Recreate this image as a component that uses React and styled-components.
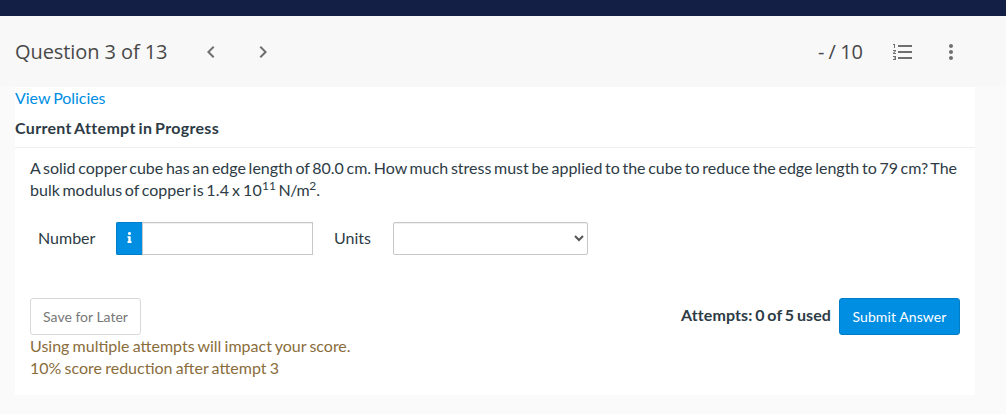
import React, { useState } from "react";
import styled, { createGlobalStyle } from "styled-components";
import {
  MdChevronLeft,
  MdChevronRight,
  MdFormatListNumbered,
  MdMoreVert,
} from "react-icons/md";
import { FaInfo } from "react-icons/fa";

function App() {
  const [number, setNumber] = useState("");
  const [unit, setUnit] = useState("");

  return (
    <>
      <GlobalStyle />
      <TopBar />
      <Header>
        <Title>Question 3 of 13</Title>
        <IconButton aria-label="Previous question">
          <MdChevronLeft />
        </IconButton>
        <IconButton $left={28} aria-label="Next question">
          <MdChevronRight />
        </IconButton>
        <Score>- / 10</Score>
        <IconButton $left={28} aria-label="Question list">
          <MdFormatListNumbered />
        </IconButton>
        <IconButton $left={24} aria-label="More options">
          <MdMoreVert />
        </IconButton>
      </Header>

      <Panel>
        <PolicyLink href="#">View Policies</PolicyLink>
        <Status>Current Attempt in Progress</Status>
        <Body>
          <Question>
            A solid copper cube has an edge length of 80.0 cm. How much stress
            must be applied to the cube to reduce the edge length to 79 cm? The
            bulk modulus of copper is <Value>1.4 x 10</Value>
            <sup>11</sup> <Value $tight>N/m</Value>
            <sup>2</sup>.
          </Question>

          <AnswerRow>
            <Label htmlFor="number" $width={78}>
              Number
            </Label>
            <Info aria-label="Number format">
              <FaInfo />
            </Info>
            <NumberInput
              id="number"
              value={number}
              onChange={(e) => setNumber(e.target.value)}
            />
            <Label htmlFor="units" $width={59} $left={21}>
              Units
            </Label>
            <UnitSelect
              id="units"
              value={unit}
              onChange={(e) => setUnit(e.target.value)}
            >
              <option value=""></option>
            </UnitSelect>
          </AnswerRow>

          <Actions>
            <Button>Save for Later</Button>
            <Attempts>Attempts: 0 of 5 used</Attempts>
            <Button $primary>Submit Answer</Button>
          </Actions>

          <Warning>
            <div>Using multiple attempts will impact your score.</div>
            <div>10% score reduction after attempt 3</div>
          </Warning>
        </Body>
      </Panel>
    </>
  );
}

const GlobalStyle = createGlobalStyle`
  * {
    box-sizing: border-box;
  }
  body {
    margin: 0;
    background: #fafafa;
    color: #2d3b45;
    font-family: Lato, "Open Sans", sans-serif;
    font-size: 16px;
    line-height: 22px;
  }
`;

const TopBar = styled.div`
  height: 16px;
  background: #131f45;
`;

const Header = styled.header`
  display: flex;
  align-items: center;
  height: 71px;
  padding: 1px 43px 0 15px;
  background: #f8f8f8;
  color: #484848;
  font-family: "Open Sans", sans-serif;
  font-size: 20px;
`;

const Title = styled.div`
  width: 184px;
  letter-spacing: -0.08px;
`;

const IconButton = styled.button`
  display: flex;
  margin: 0 0 0 ${(props) => props.$left || 0}px;
  padding: 0;
  border: none;
  background: none;
  color: #6f6f6f;
  font-size: 24px;
  cursor: pointer;
`;

const Score = styled.div`
  margin-left: auto;
  word-spacing: -1px;
`;

const Panel = styled.main`
  width: 960px;
  height: 308px;
  margin-left: 15px;
  background: #fff;
`;

const PolicyLink = styled.a`
  display: block;
  color: #008ee2;
  text-decoration: none;
  letter-spacing: -0.05px;
  word-spacing: -1px;
`;

const Status = styled.div`
  height: 39px;
  padding-top: 8px;
  border-bottom: 1px solid #eee;
  font-weight: 700;
  letter-spacing: 0.32px;
  word-spacing: -1.4px;
`;

const Body = styled.div`
  padding: 9px 15px 0;
`;

const Question = styled.p`
  margin: 0;
  word-spacing: -1.44px;
  sup {
    position: relative;
    top: -0.5em;
    font-size: 75%;
    line-height: 0;
    vertical-align: baseline;
  }
`;

const Value = styled.span`
  letter-spacing: ${(props) => (props.$tight ? "-0.5px" : "0.2px")};
`;

const AnswerRow = styled.div`
  display: flex;
  align-items: center;
  margin-top: 21px;
  padding-left: 8px;
`;

const Label = styled.label`
  width: ${(props) => props.$width}px;
  margin-left: ${(props) => props.$left || 0}px;
  padding-bottom: 2px;
`;

const Info = styled.button`
  display: flex;
  justify-content: center;
  align-items: center;
  width: 26px;
  height: 33px;
  padding: 0 1px 2px 0;
  border: 1px solid #007dc7;
  border-right: none;
  border-radius: 2px 0 0 2px;
  background: #008ee2;
  color: #fff;
  font-size: 11px;
`;

const NumberInput = styled.input`
  width: 171px;
  height: 33px;
  border: 1px solid #c7c7c7;
  box-shadow: inset 0 1px 1px #eee;
  outline: none;
`;

const UnitSelect = styled.select`
  width: 195px;
  height: 33px;
  padding-right: 1px;
  border: 1px solid #c7c7c7;
  border-radius: 2px;
  background: #fff;
  box-shadow: inset 0 1px 1px #eee;
  color: #555;
`;

const Actions = styled.div`
  display: flex;
  margin-top: 43px;
`;

const Button = styled.button`
  width: ${(props) => (props.$primary ? 121 : 111)}px;
  height: 37px;
  padding: 0;
  border: 1px solid ${(props) => (props.$primary ? "#007dc7" : "#d8d8d8")};
  border-radius: 3px;
  background: ${(props) => (props.$primary ? "#008ee2" : "#fff")};
  color: ${(props) => (props.$primary ? "#fff" : "#777")};
  font-family: Lato, sans-serif;
  font-size: 14px;
  letter-spacing: ${(props) => (props.$primary ? 0.1 : 0)}px;
  cursor: pointer;
`;

const Attempts = styled.div`
  margin: 6px 8px 0 auto;
  font-weight: 700;
  letter-spacing: 0.1px;
  word-spacing: -1.2px;
`;

const Warning = styled.div`
  color: #8a6d3b;
  word-spacing: -0.9px;
`;

export default App;
